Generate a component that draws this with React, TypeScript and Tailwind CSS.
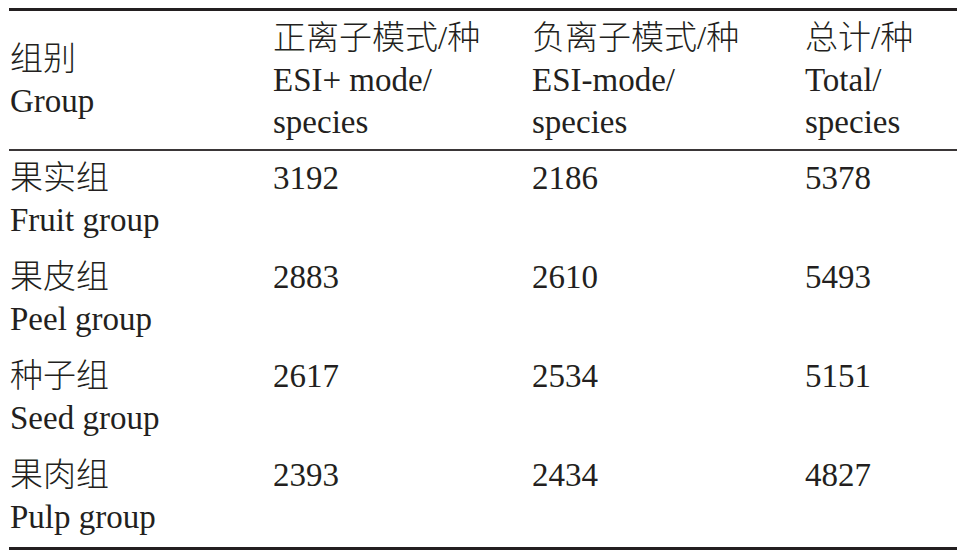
const rows = [
  { zh: "果实组", en: "Fruit group", pos: "3192", neg: "2186", total: "5378" },
  { zh: "果皮组", en: "Peel group", pos: "2883", neg: "2610", total: "5493" },
  { zh: "种子组", en: "Seed group", pos: "2617", neg: "2534", total: "5151" },
  { zh: "果肉组", en: "Pulp group", pos: "2393", neg: "2434", total: "4827" },
];

const cols = "grid grid-cols-[263px_259px_273px_153px]";

// Chinese line: lighter weight to match the thin Hei face in the source
function Zh({ children }: { children: React.ReactNode }) {
  return <span className="font-light">{children}</span>;
}

export default function App() {
  return (
    <div
      className="w-[964px] h-[556px] bg-white pt-[8px] pl-[9px] text-[#231f20] text-[33px] leading-[42px]"
      style={{ fontFamily: '"Liberation Serif", "Noto Sans CJK SC", serif' }}
    >
      <div className="w-[948px] border-t-[3px] border-b-[3px] border-[#231f20]">
        {/* header */}
        <div className={`${cols} pt-[6px] pb-[6px] border-b-2 border-[#3a3637]`}>
          <div className="pl-[1px] flex flex-col justify-center">
            <Zh>组别</Zh>
            <span>Group</span>
          </div>
          <div className="pl-[1px] flex flex-col">
            <Zh>正离子模式/种</Zh>
            <span>ESI+ mode/</span>
            <span>species</span>
          </div>
          <div className="pl-[1px] flex flex-col">
            <Zh>负离子模式/种</Zh>
            <span>ESI-mode/</span>
            <span>species</span>
          </div>
          <div className="pl-[1px] flex flex-col">
            <Zh>总计/种</Zh>
            <span>Total/</span>
            <span>species</span>
          </div>
        </div>

        {/* body */}
        {rows.map((r) => (
          <div key={r.en} className={`${cols} pt-[6px] pb-[9px]`}>
            <div className="pl-[1px] flex flex-col">
              <Zh>{r.zh}</Zh>
              <span>{r.en}</span>
            </div>
            <div className="pl-[1px]">{r.pos}</div>
            <div className="pl-[1px]">{r.neg}</div>
            <div className="pl-[1px]">{r.total}</div>
          </div>
        ))}
      </div>
    </div>
  );
}
